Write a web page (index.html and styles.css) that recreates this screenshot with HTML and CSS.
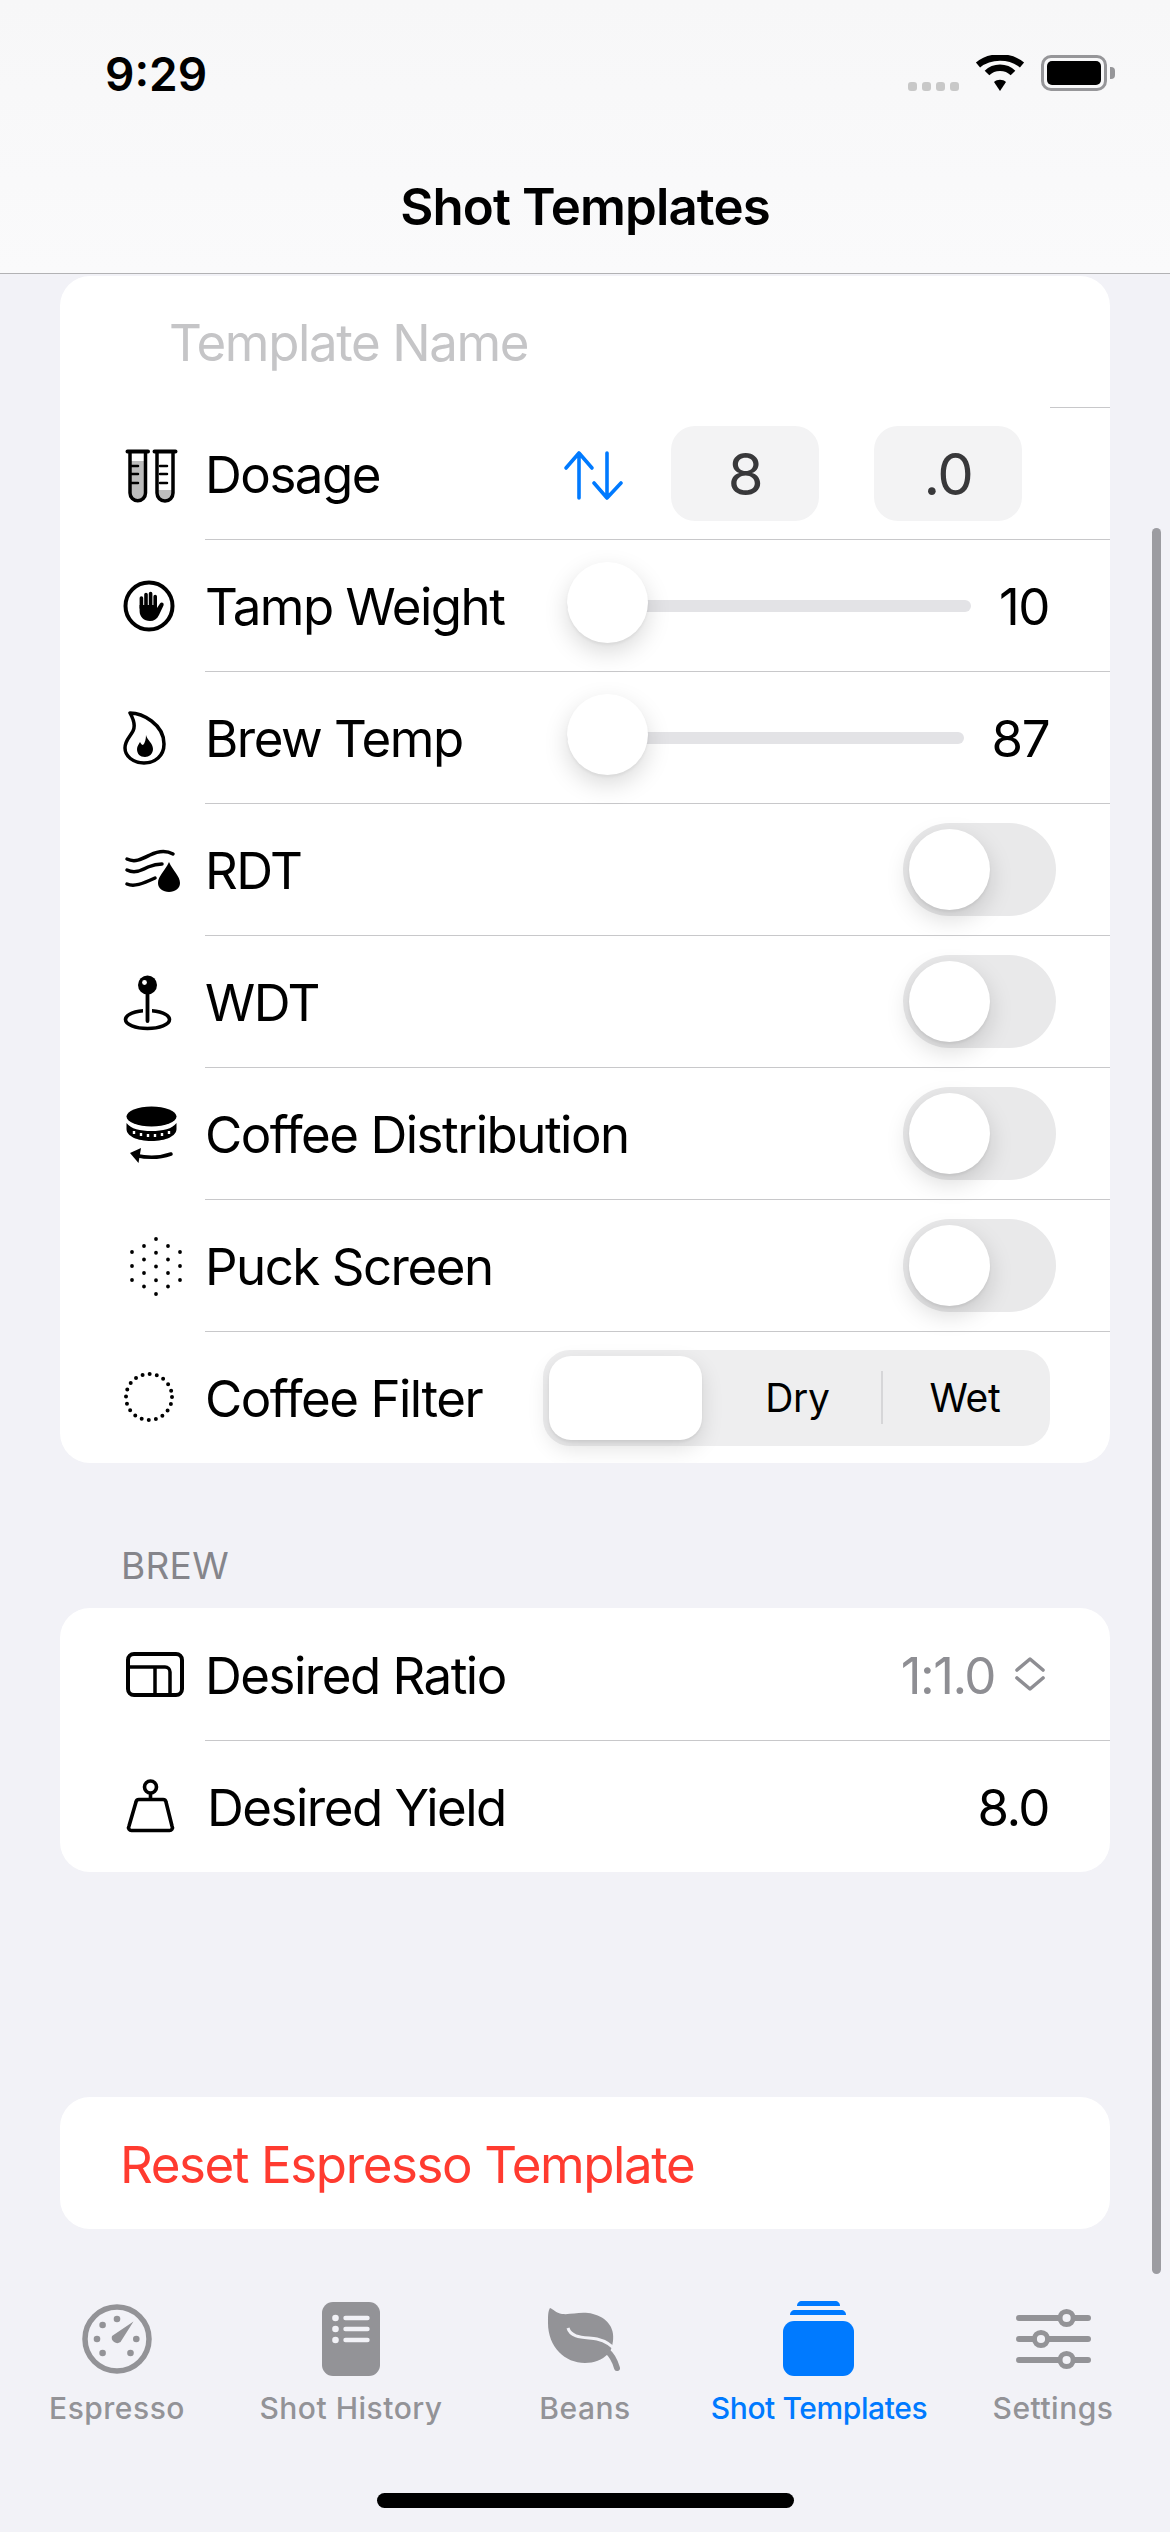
FILE: index.html
```html
<!DOCTYPE html>
<html lang="en">
<head>
<meta charset="UTF-8">
<title>Shot Templates</title>
<link rel="stylesheet" href="styles.css">
</head>
<body>
<div class="app">

  <header class="top">
    <div class="status">
      <span class="time">9:29</span>
      <div class="status-icons">
        <div class="signal"><i></i><i></i><i></i><i></i></div>
        <svg class="wifi" viewBox="0 0 50 37">
          <path d="M25 36 L19 27 C22 24 28 24 31 27 Z" fill="#000"/>
          <path d="M12 18 C19 11 31 11 38 18" fill="none" stroke="#000" stroke-width="6.5"/>
          <path d="M3 10 C15 0 35 0 47 10" fill="none" stroke="#000" stroke-width="6.5"/>
        </svg>
        <div class="battery"><div class="battery-fill"></div></div>
        <div class="battery-nub"></div>
      </div>
    </div>
    <div class="nav-title">Shot Templates</div>
  </header>

  <main class="content">
    <section class="card">
      <div class="name-row">Template Name</div>
      <div class="name-rule"></div>

      <div class="row row-first">
        <svg class="icon" viewBox="0 0 70 70" fill="none" stroke="#000" stroke-width="3.5" stroke-linecap="round">
          <path d="M10 22 H25.5 V54 A7.7 7.7 0 0 1 10 54 Z" fill="#bdbdbd" stroke="none"/>
          <path d="M37 51 H53 V54 A8 8 0 0 1 37 54 Z" fill="#bdbdbd" stroke="none"/>
          <path d="M10 13 V54 A7.7 7.7 0 0 0 25.5 54 V13"/>
          <path d="M37 13 V54 A8 8 0 0 0 53 54 V13"/>
          <path d="M7.5 12.5 H28 M34.5 12.5 H55.5" stroke-width="4"/>
          <path d="M11 27 H18 M11 35 H18 M11 44 H18 M40 27 H47 M40 35 H47 M40 44 H47" stroke-width="2.5"/>
        </svg>
        <div class="row-body">
          <span class="label dosage-label">Dosage</span>
          <svg class="arrows" viewBox="0 0 60 60" fill="none" stroke="#007aff" stroke-width="3.6" stroke-linecap="round" stroke-linejoin="round">
            <path d="M16 9 V54 M3 24 L16 9 L29 24"/>
            <path d="M44 9 V54 M31 39 L44 54 L58 39"/>
          </svg>
          <div class="stepper">8</div>
          <div class="stepper stepper-last">.0</div>
        </div>
      </div>

      <div class="row">
        <svg class="icon" viewBox="0 0 70 70">
          <circle cx="29" cy="36" r="23.5" fill="none" stroke="#000" stroke-width="4"/>
          <path d="M21.4 38 V28 M26 38 V24.5 M30.6 38 V23.5 M35.2 38 V26.5" fill="none" stroke="#000" stroke-width="3.6" stroke-linecap="round"/>
          <path d="M19.6 35 H37 V38 L40 33.5 C41.5 31.5 44.5 33 43.5 35.5 L39 45 C37 49 34 51 30 51 C24 51 19.6 47 19.6 41 Z"/>
        </svg>
        <div class="row-body">
          <span class="label slider-label">Tamp Weight</span>
          <div class="slider"><div class="slider-knob"></div></div>
          <span class="value slider-value">10</span>
        </div>
      </div>

      <div class="row">
        <svg class="icon" viewBox="0 0 70 70">
          <path d="M10 11 C22 11 44 22 44 42 C44 54 35 61 24 61 C13 61 5 54 5 46 C5 38 10 35 13 29 C15 25 14 18 10 11 Z" fill="none" stroke="#000" stroke-width="3.5" stroke-linejoin="round"/>
          <path d="M26 33 C27 38 33 41 33 47 C33 52 29 55 25 55 C20 55 17 52 17 47 C17 44 19 42 20 40 C21 42 22 43 23 43 C25 41 26 37 26 33 Z"/>
        </svg>
        <div class="row-body">
          <span class="label slider-label">Brew Temp</span>
          <div class="slider"><div class="slider-knob"></div></div>
          <span class="value slider-value">87</span>
        </div>
      </div>

      <div class="row">
        <svg class="icon" viewBox="0 0 70 70">
          <g fill="none" stroke="#000" stroke-width="3.5" stroke-linecap="round">
            <path d="M7 25 C15 29 22 25 30 21 C38 17 46 16 53 20"/>
            <path d="M7 36 C15 40 22 36 28 33 C33 31 38 30 42 30"/>
            <path d="M7 50 C14 53 22 50 35 44"/>
          </g>
          <path d="M49 28 C53 37 60 42 60 49 C60 54.5 55 58 49 58 C43 58 38 54.5 38 49 C38 42 45 37 49 28 Z"/>
        </svg>
        <div class="row-body">
          <span class="label">RDT</span>
          <div class="toggle"><div class="toggle-knob"></div></div>
        </div>
      </div>

      <div class="row">
        <svg class="icon" viewBox="0 0 70 70">
          <ellipse cx="27.5" cy="53.5" rx="22" ry="9" fill="none" stroke="#000" stroke-width="3.6"/>
          <path d="M27.5 40 V52" stroke="#fff" stroke-width="9"/>
          <path d="M27.5 22 V55" stroke="#000" stroke-width="3.8" stroke-linecap="round"/>
          <circle cx="27.5" cy="19" r="9.5"/>
          <circle cx="24.5" cy="16.5" r="2.4" fill="#fff"/>
        </svg>
        <div class="row-body">
          <span class="label">WDT</span>
          <div class="toggle"><div class="toggle-knob"></div></div>
        </div>
      </div>

      <div class="row">
        <svg class="icon" viewBox="0 0 70 70">
          <ellipse cx="31.5" cy="18.5" rx="25" ry="10"/>
          <path d="M6.5 25 V31 C6.5 38 17 43 31.5 43 C46 43 56.5 38 56.5 31 V25 C52 31 43 33 31.5 33 C20 33 11 31 6.5 25 Z"/>
          <path d="M14 33 V36 M21 35 V38 M28 36 V39 M35 36 V39 M42 35 V38 M49 33 V36" stroke="#fff" stroke-width="2.4"/>
          <path d="M16 57.5 C27 60 40 60 51 56" fill="none" stroke="#000" stroke-width="3.5" stroke-linecap="round"/>
          <path d="M10 55 L21 50 L18.5 65 Z"/>
        </svg>
        <div class="row-body">
          <span class="label">Coffee Distribution</span>
          <div class="toggle"><div class="toggle-knob"></div></div>
        </div>
      </div>

      <div class="row">
        <svg class="icon" viewBox="0 0 70 70" stroke="#000" stroke-width="3.8" stroke-linecap="round">
          <path d="M12 22 V50.1 M60 22 V50.1" stroke-dasharray="0 14"/>
          <path d="M24 16 V57 M48 16 V57" stroke-dasharray="0 13.5"/>
          <path d="M36 9 V64.1" stroke-dasharray="0 13.75"/>
        </svg>
        <div class="row-body">
          <span class="label">Puck Screen</span>
          <div class="toggle"><div class="toggle-knob"></div></div>
        </div>
      </div>

      <div class="row">
        <svg class="icon" viewBox="0 0 70 70">
          <circle cx="29" cy="35" r="23" fill="none" stroke="#000" stroke-width="4" stroke-linecap="round" stroke-dasharray="0 7.225"/>
        </svg>
        <div class="row-body">
          <span class="label filter-label">Coffee Filter</span>
          <div class="segments">
            <div class="seg-selected"></div>
            <div class="seg-item seg-dry">Dry</div>
            <div class="seg-divider"></div>
            <div class="seg-item seg-wet">Wet</div>
          </div>
        </div>
      </div>
    </section>

    <div class="section-title">BREW</div>
    <section class="card">
      <div class="row row-plain">
        <svg class="icon" viewBox="0 0 70 70" fill="none" stroke="#000" stroke-width="4">
          <rect x="8" y="15" width="54" height="41" rx="6"/>
          <path d="M8 28 H45 A5 5 0 0 1 50 33 V56 M35 28 V56" stroke-width="3.5"/>
        </svg>
        <div class="row-body">
          <span class="label">Desired Ratio</span>
          <span class="value value-grey">1:1.0</span>
          <svg class="chevrons" viewBox="0 0 30 36" fill="none" stroke="#8e8e93" stroke-width="3.6" stroke-linecap="round" stroke-linejoin="round">
            <path d="M2 14 L15 3 L28 14"/>
            <path d="M2 22 L15 33 L28 22"/>
          </svg>
        </div>
      </div>
      <div class="row">
        <svg class="icon" viewBox="0 0 70 70" fill="none" stroke="#000" stroke-width="3.6">
          <circle cx="30.5" cy="16" r="6"/>
          <path d="M30.5 22 V28"/>
          <path d="M19 28.5 H43 A3 3 0 0 1 46 31 L52 55 A3 3 0 0 1 49 59.5 H12 A3 3 0 0 1 9 55 L16 31 A3 3 0 0 1 19 28.5 Z" stroke-linejoin="round"/>
        </svg>
        <div class="row-body">
          <span class="label yield-label">Desired Yield</span>
          <span class="value">8.0</span>
        </div>
      </div>
    </section>

    <section class="card reset-card">Reset Espresso Template</section>
  </main>

  <nav class="tabs">
    <div class="tab">
      <svg class="tab-icon" viewBox="0 0 76 76" fill="#939397">
        <circle cx="38" cy="38" r="32" fill="none" stroke="#939397" stroke-width="5.5"/>
        <circle cx="38" cy="18" r="3.3"/><circle cx="23.6" cy="24" r="3.3"/><circle cx="18" cy="38" r="3.3"/>
        <circle cx="23.6" cy="52" r="3.3"/><circle cx="51.5" cy="52" r="3.3"/><circle cx="57.3" cy="38" r="3.3"/>
        <path d="M54.5 20.5 L41.5 41 A5.5 5.5 0 0 1 33 35 Z"/>
      </svg>
      <span class="tab-label">Espresso</span>
    </div>
    <div class="tab">
      <svg class="tab-icon" viewBox="0 0 76 76">
        <rect x="9" y="1" width="58" height="74" rx="11" fill="#939397"/>
        <circle cx="22.5" cy="17" r="3.3" fill="#f2f2f7"/><circle cx="22.5" cy="28" r="3.3" fill="#f2f2f7"/><circle cx="22.5" cy="39" r="3.3" fill="#f2f2f7"/>
        <path d="M32.5 17 H54.5 M32.5 28 H54.5 M32.5 39 H54.5" stroke="#f2f2f7" stroke-width="4.4" stroke-linecap="round"/>
      </svg>
      <span class="tab-label">Shot History</span>
    </div>
    <div class="tab">
      <svg class="tab-icon" viewBox="0 0 76 76">
        <path d="M3 7 C6 8 9 12 15 13 C25 14 34 10 46 13 C59 16 68 26 66 40 C65 46 64 50 61 53 C55 59 47 62 38 62 C18 62 1 46 1 22 C1 15 1 10 3 7 Z" fill="#939397"/>
        <path d="M21 27 C24 38 40 36 50 38 C58 40 64 43 69 50" fill="none" stroke="#f2f2f7" stroke-width="3"/>
        <path d="M60 50 C65 54 68 60 70 67" fill="none" stroke="#939397" stroke-width="6" stroke-linecap="round"/>
      </svg>
      <span class="tab-label">Beans</span>
    </div>
    <div class="tab tab-active">
      <svg class="tab-icon" viewBox="0 0 76 76" fill="#007aff">
        <path d="M16 5 C16 2 18 0 21 0 H54 C57 0 59 2 59 5 Z"/>
        <path d="M9 14 C9 11 11 9 14 9 H60 C63 9 65 11 65 14 Z"/>
        <rect x="2" y="20" width="71" height="55" rx="11"/>
      </svg>
      <span class="tab-label">Shot Templates</span>
    </div>
    <div class="tab">
      <svg class="tab-icon" viewBox="0 0 76 76" fill="#f2f2f7" stroke="#939397">
        <path d="M4 17 H73 M4 38 H73 M4 59 H73" stroke-width="6" stroke-linecap="round"/>
        <circle cx="51.6" cy="17" r="6.6" stroke-width="5"/>
        <circle cx="26" cy="38" r="6.6" stroke-width="5"/>
        <circle cx="51.6" cy="59" r="6.6" stroke-width="5"/>
      </svg>
      <span class="tab-label">Settings</span>
    </div>
  </nav>
  <div class="home-bar"></div>

  <!-- overlay scroll indicator -->
  <div class="scroll-thumb"></div>
</div>
</body>
</html>
```

FILE: styles.css
```css
body {
  margin: 0;
  font-family: Inter, "Liberation Sans", sans-serif;
  color: #000;
}
.app {
  position: relative;
  display: flex;
  flex-direction: column;
  width: 1170px;
  height: 2532px;
  overflow: hidden;
  background: #f2f2f7;
}

/* header */
.top {
  height: 273px;
  flex-shrink: 0;
  background: linear-gradient(#f7f7f8, #fafafb);
  border-bottom: 1px solid #b2b2b4;
}
.status {
  display: flex;
  justify-content: space-between;
  height: 148px;
  padding: 50px 55px 0 105px;
  box-sizing: border-box;
}
.time {
  font-size: 46px;
  line-height: 48px;
  font-weight: 600;
}
.status-icons {
  display: flex;
  align-items: flex-start;
  padding-top: 5px;
}
.signal {
  display: flex;
  gap: 5px;
  margin: 27px 16px 0 0;
}
.signal i {
  width: 9px;
  height: 9px;
  border-radius: 3px;
  background: #c8c8c8;
}
.wifi {
  width: 50px;
  height: 37px;
  margin-right: 16px;
}
.battery {
  width: 66px;
  height: 36px;
  padding: 3px;
  box-sizing: border-box;
  border: 3px solid #969699;
  border-radius: 10px;
}
.battery-fill {
  height: 100%;
  border-radius: 5px;
  background: #000;
}
.battery-nub {
  width: 5px;
  height: 12px;
  margin: 12px 0 0 3px;
  border-radius: 0 4px 4px 0;
  background: #969699;
}
.nav-title {
  font-size: 51px;
  line-height: 60px;
  font-weight: 600;
  text-align: center;
  letter-spacing: -0.9px;
  margin-top: 29px;
}

/* cards */
.content {
  flex: 1;
  padding: 2px 60px 0;
}
.card {
  background: #fff;
  border-radius: 30px;
  overflow: hidden;
}
.name-row {
  height: 131px;
  padding: 0 0 0 109px;
  font-size: 51px;
  line-height: 134px;
  letter-spacing: -1.4px;
  color: #c5c5c7;
}
.name-rule {
  height: 1px;
  margin-left: 990px;
  background: #c8c8ca;
}
.row {
  display: flex;
  height: 132px;
}
.row-first {
  height: 131px;
}
.icon {
  width: 70px;
  height: 70px;
  flex-shrink: 0;
  align-self: center;
  margin: 0 15px 0 60px;
}
.row-body {
  flex: 1;
  display: flex;
  align-items: center;
  padding-right: 61px;
  border-top: 1px solid #c8c8ca;
}
.row-first .row-body,
.row-plain .row-body {
  border-top: none;
}
.label {
  padding-top: 2px;
  font-size: 51px;
  letter-spacing: -1.5px;
  flex-shrink: 0;
  margin-right: auto;
}
.dosage-label { width: 358px; margin-right: 0; }
.slider-label { width: 362px; margin-right: 0; }
.filter-label { width: 338px; margin-right: 0; }
.yield-label { margin-left: 2px; }
.value {
  padding-top: 2px;
  font-size: 51px;
  letter-spacing: -1.5px;
}
.value-grey {
  color: #8e8e93;
}
.arrows {
  width: 60px;
  height: 60px;
  margin-right: 48px;
}
.stepper {
  width: 148px;
  height: 95px;
  margin-right: 55px;
  border-radius: 24px;
  background: #f3f3f4;
  color: #38383a;
  font-size: 58px;
  line-height: 97px;
  text-align: center;
  letter-spacing: -1.5px;
}
.stepper-last {
  margin-right: 0;
}

/* slider */
.slider {
  position: relative;
  flex: 1;
  height: 12px;
  border-radius: 6px;
  background: #e3e3e6;
}
.slider-knob {
  position: absolute;
  left: 0;
  top: -38px;
  width: 81px;
  height: 81px;
  border-radius: 50%;
  background: #fff;
  box-shadow: 0 9px 24px rgba(0, 0, 0, 0.15), 0 2px 3px rgba(0, 0, 0, 0.05);
}
.slider-value {
  margin-left: 28px;
}

/* toggle */
.toggle {
  width: 153px;
  height: 93px;
  margin-right: -7px;
  padding: 6px;
  box-sizing: border-box;
  border-radius: 47px;
  background: #e9e9ea;
}
.toggle-knob {
  width: 81px;
  height: 81px;
  border-radius: 50%;
  background: #fff;
  box-shadow: 0 9px 24px rgba(0, 0, 0, 0.15), 0 2px 3px rgba(0, 0, 0, 0.06);
}

/* segmented control */
.segments {
  display: flex;
  align-items: center;
  flex-shrink: 0;
  width: 507px;
  height: 96px;
  margin-right: -1px;
  padding: 0 6px;
  box-sizing: border-box;
  border-radius: 27px;
  background: #eeeeef;
}
.seg-selected {
  width: 153px;
  height: 84px;
  margin-right: 12px;
  border-radius: 22px;
  background: #fff;
  box-shadow: 0 8px 22px rgba(0, 0, 0, 0.12), 0 2px 3px rgba(0, 0, 0, 0.06);
}
.seg-item {
  font-size: 39px;
  text-align: center;
  letter-spacing: -0.3px;
}
.seg-dry {
  width: 167px;
}
.seg-wet {
  flex: 1;
  padding-left: 3px;
}
.seg-divider {
  width: 2px;
  height: 53px;
  background: #d6d6d8;
}
.chevrons {
  width: 30px;
  height: 36px;
  margin: 0 4px 0 20px;
}

/* brew */
.section-title {
  margin: 81px 0 20px 61px;
  font-size: 37px;
  line-height: 44px;
  letter-spacing: 0.3px;
  color: #85858b;
}
.reset-card {
  height: 132px;
  margin-top: 225px;
  padding-left: 60px;
  font-size: 51px;
  line-height: 135px;
  letter-spacing: -1.4px;
  color: #ff3b30;
}

/* tab bar */
.tabs {
  display: flex;
  flex-shrink: 0;
  padding-top: 16px;
}
.tab {
  width: 234px;
  display: flex;
  flex-direction: column;
  align-items: center;
  color: #939397;
}
.tab-active {
  color: #007aff;
}
.tab-icon {
  width: 76px;
  height: 76px;
}
.tab-label {
  margin-top: 13px;
  font-size: 30px;
  line-height: 36px;
  font-weight: 500;
  letter-spacing: 0.5px;
}
.tab-active .tab-label {
  letter-spacing: -0.4px;
}
.home-bar {
  flex-shrink: 0;
  width: 417px;
  height: 15px;
  margin: 67px auto 24px;
  border-radius: 8px;
  background: #000;
}
.scroll-thumb {
  position: absolute;
  left: 1152px;
  top: 528px;
  width: 9px;
  height: 1746px;
  border-radius: 5px;
  background: #9c9ca1;
}
```
